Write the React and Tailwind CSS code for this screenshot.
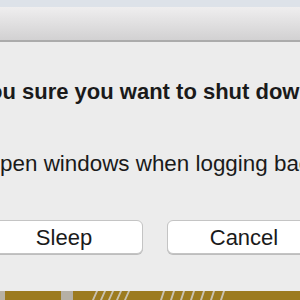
export default function App() {
  return (
    <div className="w-[300px] h-[300px] overflow-hidden flex flex-col bg-[#ececec]" style={{ fontFamily: '"Liberation Sans", Arial, sans-serif' }}>
      <div className="h-[7px] shrink-0 bg-[#dde2e9]" />
      <div className="h-[35px] shrink-0 bg-gradient-to-b from-[#efeeef] to-[#d2d1d2] border-b-2 border-[#ababab]" />
      <div className="flex-1 flex flex-col">
        <div className="pt-[37px] ml-[-66px] whitespace-nowrap text-[22px] leading-[26px] font-bold text-[#1a1a1a]">
          Are you sure you want to shut down your computer now?
        </div>
        <div className="pt-[46px] ml-[-41px] whitespace-nowrap text-[22.4px] leading-[26px] text-[#1a1a1a]">
          Reopen windows when logging back in
        </div>
        <div className="mt-[43px] ml-[-15px] flex gap-[24px]">
          <div className="w-[158px] h-[34px] shrink-0 rounded-[6px] bg-white border border-[#c4c4c4] shadow-[0_1px_0_#bdbdbd] flex items-center justify-center text-[22px] text-[#1a1a1a]">
            Sleep
          </div>
          <div className="w-[154px] h-[34px] shrink-0 rounded-[6px] bg-white border border-[#c4c4c4] shadow-[0_1px_0_#bdbdbd] flex items-center justify-center text-[22px] text-[#1a1a1a]">
            Cancel
          </div>
        </div>
      </div>
      <div className="h-[9px] shrink-0 bg-[#9c7b1f]">
        <svg width="300" height="9" viewBox="0 0 300 9">
          <rect x="0" y="0" width="5" height="9" fill="#b8b2a4" />
          <rect x="61" y="0" width="12" height="9" fill="#b5b0a5" />
          <path d="M92 9 L96 0 L98 0 L94 9Z M100 9 L104 0 L106 0 L102 9Z M108 9 L112 0 L114 0 L110 9Z M116 9 L120 0 L122 0 L118 9Z M124 9 L128 0 L130 0 L126 9Z" fill="#c9c2b0" />
          <path d="M160 9 L163 0 L165 0 L162 9Z M170 9 L173 0 L175 0 L172 9Z M180 9 L183 0 L185 0 L182 9Z M190 9 L193 0 L195 0 L192 9Z M200 9 L203 0 L205 0 L202 9Z M210 9 L213 0 L215 0 L212 9Z M220 9 L223 0 L225 0 L222 9Z" fill="#c9c2b0" />
        </svg>
      </div>
    </div>
  );
}
